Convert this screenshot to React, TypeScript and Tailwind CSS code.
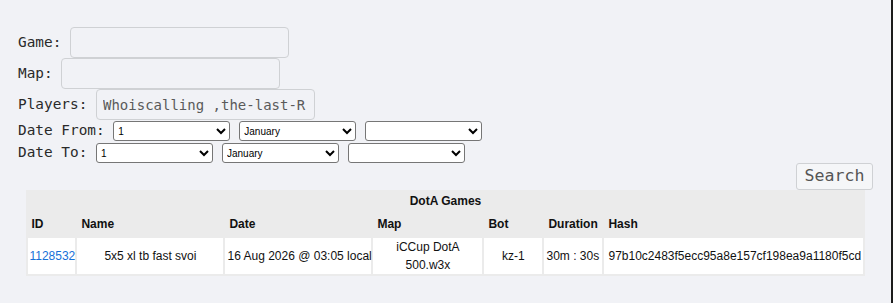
import React from "react"

const mono = { fontFamily: '"DejaVu Sans Mono", monospace' }
const sans = { fontFamily: '"Liberation Sans", Arial, sans-serif' }

function Field({ label, value }: { label: string; value?: string }) {
  return (
    <div className="flex items-center text-[14.4px] text-[#2a2a2a] whitespace-pre">
      <span>{label} </span>
      <input
        readOnly
        value={value ?? ""}
        className="h-[31px] w-[219px] rounded-[4px] border border-[#cfd1d4] bg-transparent px-[6px] text-[14px] text-[#5a5a5a] outline-none"
        style={mono}
      />
    </div>
  )
}

function DateRow({ label }: { label: string }) {
  return (
    <div className="flex h-[22px] items-center text-[14.4px] text-[#2a2a2a] whitespace-pre">
      <span>{label} </span>
      <select className="h-[20px] w-[117px] rounded-[3px] border border-[#767676] bg-white text-[10px] text-black" style={sans}>
        <option>1</option>
      </select>
      <select className="ml-[9px] h-[20px] w-[117px] rounded-[3px] border border-[#767676] bg-white text-[10px] text-black" style={sans}>
        <option>January</option>
      </select>
      <select className="ml-[9px] h-[20px] w-[117px] rounded-[3px] border border-[#767676] bg-white text-[10px] text-black" style={sans}>
        <option></option>
      </select>
    </div>
  )
}

export default function App() {
  return (
    <div className="h-[303px] w-[893px] overflow-hidden border-r-2 border-[#1c1c1c] bg-[#f1f2f6]" style={mono}>
      {/* Search form */}
      <div className="pl-[18px] pt-[27px]">
        <Field label="Game:" />
        <Field label="Map:" />
        <Field label="Players:" value="Whoiscalling ,the-last-R" />
        <DateRow label="Date From:" />
        <DateRow label="Date To:" />
      </div>

      <div className="-mt-px flex justify-end pr-[18px]">
        <button className="h-[27px] w-[77px] rounded-[3px] border border-[#cfd1d4] bg-[#f5f6f8] text-[16.6px] text-[#555]">
          Search
        </button>
      </div>

      {/* Games table */}
      <table
        className="mx-auto w-[838px] table-fixed border-separate border-spacing-[2px] bg-[#ebebeb] text-[12px] leading-[18px] text-[#111]"
        style={sans}
      >
        <colgroup>
          <col className="w-[47px]" />
          <col className="w-[146px]" />
          <col className="w-[146px]" />
          <col className="w-[109px]" />
          <col className="w-[58px]" />
          <col className="w-[58px]" />
          <col className="w-[258px]" />
        </colgroup>
        <thead>
          <tr>
            <th colSpan={7} className="h-[17px] p-0 text-center font-bold">DotA Games</th>
          </tr>
          <tr className="h-[24px] text-left font-bold">
            <th className="px-[3px]">ID</th>
            <th className="px-[4px]">Name</th>
            <th className="px-[4px]">Date</th>
            <th className="px-[4px]">Map</th>
            <th className="px-[4px]">Bot</th>
            <th className="px-[4px]">Duration</th>
            <th className="px-[4px]">Hash</th>
          </tr>
        </thead>
        <tbody>
          <tr className="h-[35px] bg-white">
            <td className="p-0 pl-[1px] text-[#1670d8]">1128532</td>
            <td className="text-center">5x5 xl tb fast svoi</td>
            <td className="whitespace-nowrap px-[2px]">16 Aug 2026 @ 03:05 local</td>
            <td className="text-center">iCCup DotA 500.w3x</td>
            <td className="text-center">kz-1</td>
            <td className="whitespace-nowrap px-[2px]">30m : 30s</td>
            <td className="whitespace-nowrap px-[4px]">97b10c2483f5ecc95a8e157cf198ea9a1180f5cd</td>
          </tr>
        </tbody>
      </table>
    </div>
  )
}
